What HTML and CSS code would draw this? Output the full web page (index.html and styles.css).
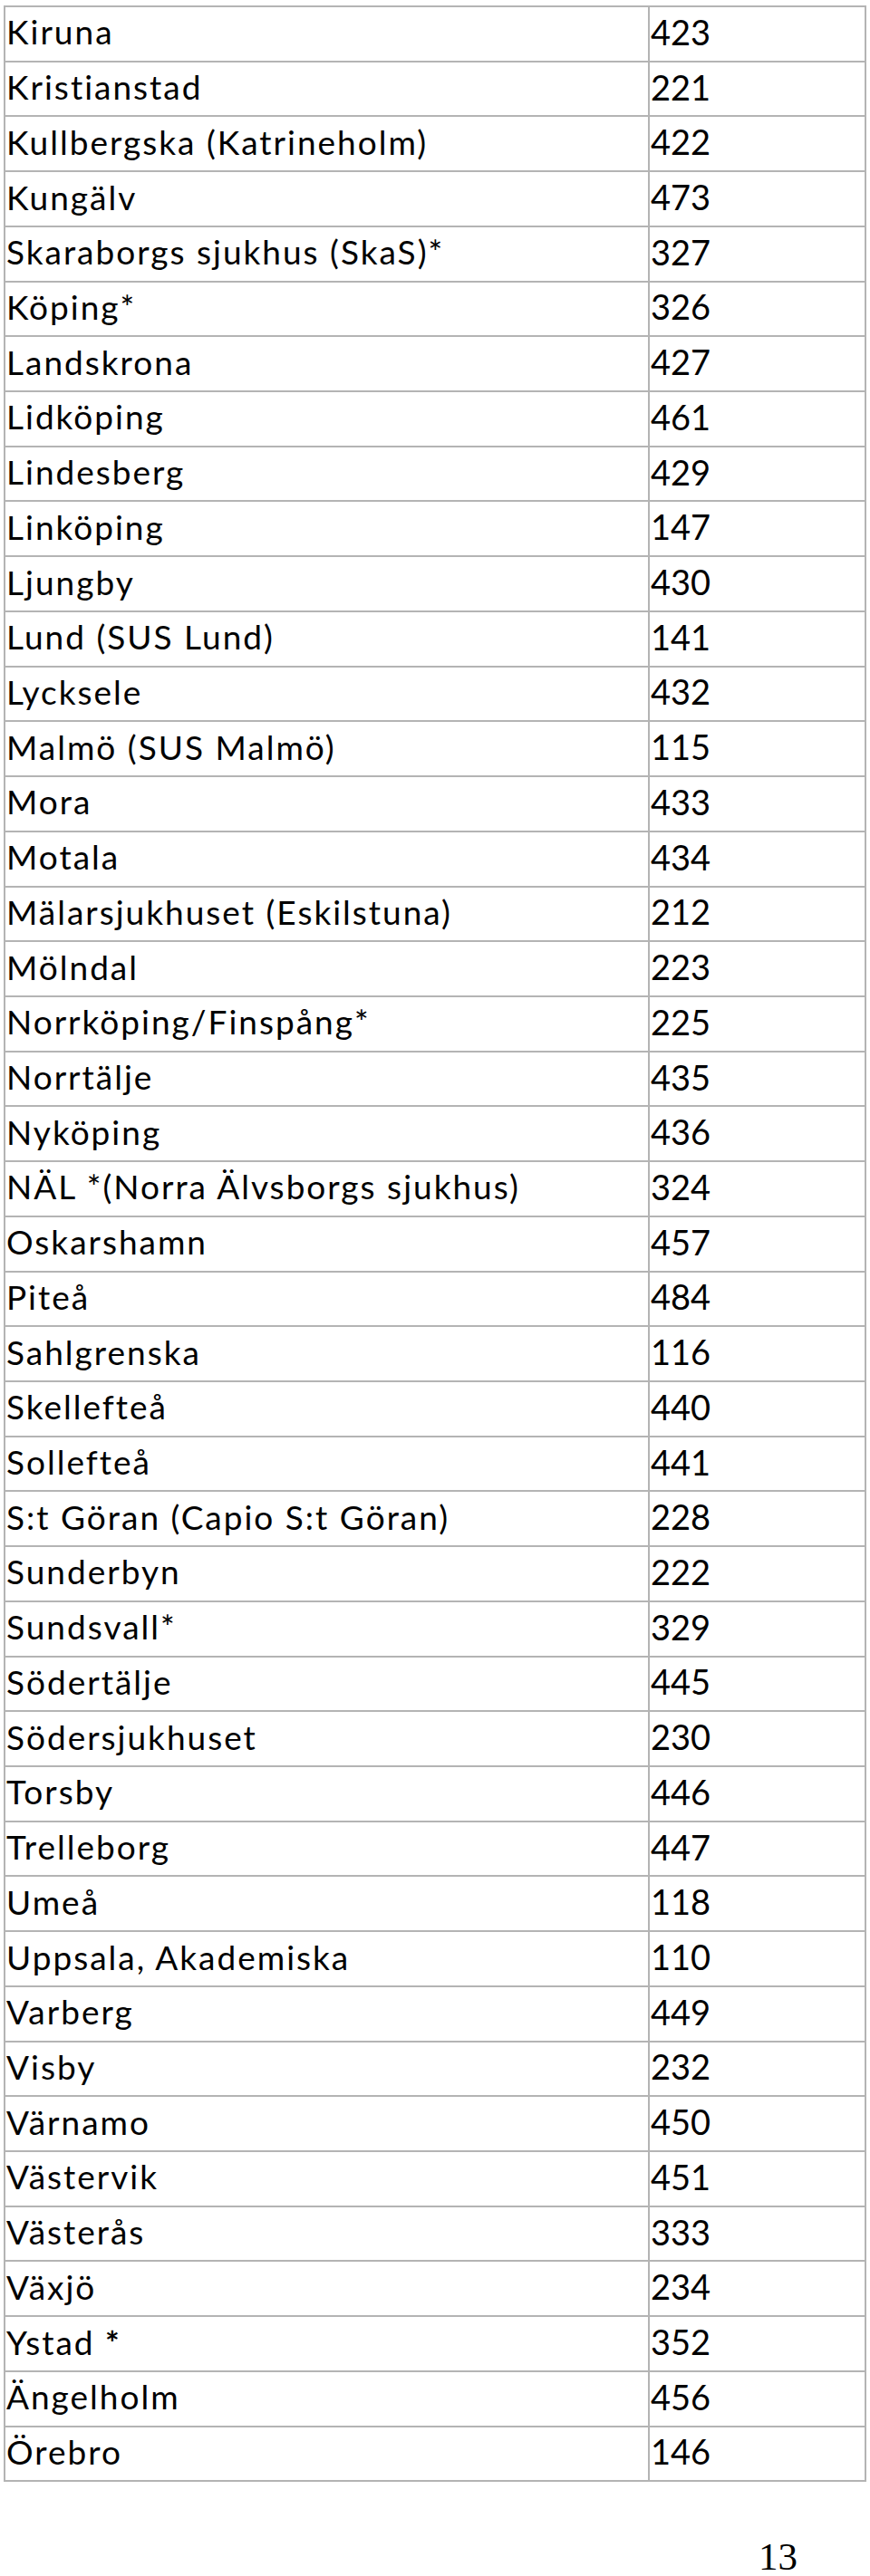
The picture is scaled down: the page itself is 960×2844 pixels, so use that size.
FILE: index.html
```html
<!DOCTYPE html>
<html lang="sv">
<head>
<meta charset="utf-8">
<title>Sjukhus</title>
<link rel="stylesheet" href="styles.css">
</head>
<body>
<table class="list">
<colgroup><col class="c-name"><col class="c-num"></colgroup>
<tr><td class="name">Kiruna</td><td class="num">423</td></tr>
<tr><td class="name">Kristianstad</td><td class="num">221</td></tr>
<tr><td class="name">Kullbergska (Katrineholm)</td><td class="num">422</td></tr>
<tr><td class="name">Kungälv</td><td class="num">473</td></tr>
<tr><td class="name">Skaraborgs sjukhus (SkaS)*</td><td class="num">327</td></tr>
<tr><td class="name">Köping*</td><td class="num">326</td></tr>
<tr><td class="name">Landskrona</td><td class="num">427</td></tr>
<tr><td class="name">Lidköping</td><td class="num">461</td></tr>
<tr><td class="name">Lindesberg</td><td class="num">429</td></tr>
<tr><td class="name">Linköping</td><td class="num">147</td></tr>
<tr><td class="name">Ljungby</td><td class="num">430</td></tr>
<tr><td class="name">Lund (SUS Lund)</td><td class="num">141</td></tr>
<tr><td class="name">Lycksele</td><td class="num">432</td></tr>
<tr><td class="name">Malmö (SUS Malmö)</td><td class="num">115</td></tr>
<tr><td class="name">Mora</td><td class="num">433</td></tr>
<tr><td class="name">Motala</td><td class="num">434</td></tr>
<tr><td class="name">Mälarsjukhuset (Eskilstuna)</td><td class="num">212</td></tr>
<tr><td class="name">Mölndal</td><td class="num">223</td></tr>
<tr><td class="name">Norrköping/Finspång*</td><td class="num">225</td></tr>
<tr><td class="name">Norrtälje</td><td class="num">435</td></tr>
<tr><td class="name">Nyköping</td><td class="num">436</td></tr>
<tr><td class="name">NÄL *(Norra Älvsborgs sjukhus)</td><td class="num">324</td></tr>
<tr><td class="name">Oskarshamn</td><td class="num">457</td></tr>
<tr><td class="name">Piteå</td><td class="num">484</td></tr>
<tr><td class="name">Sahlgrenska</td><td class="num">116</td></tr>
<tr><td class="name">Skellefteå</td><td class="num">440</td></tr>
<tr><td class="name">Sollefteå</td><td class="num">441</td></tr>
<tr><td class="name">S:t Göran (Capio S:t Göran)</td><td class="num">228</td></tr>
<tr><td class="name">Sunderbyn</td><td class="num">222</td></tr>
<tr><td class="name">Sundsvall*</td><td class="num">329</td></tr>
<tr><td class="name">Södertälje</td><td class="num">445</td></tr>
<tr><td class="name">Södersjukhuset</td><td class="num">230</td></tr>
<tr><td class="name">Torsby</td><td class="num">446</td></tr>
<tr><td class="name">Trelleborg</td><td class="num">447</td></tr>
<tr><td class="name">Umeå</td><td class="num">118</td></tr>
<tr><td class="name">Uppsala, Akademiska</td><td class="num">110</td></tr>
<tr><td class="name">Varberg</td><td class="num">449</td></tr>
<tr><td class="name">Visby</td><td class="num">232</td></tr>
<tr><td class="name">Värnamo</td><td class="num">450</td></tr>
<tr><td class="name">Västervik</td><td class="num">451</td></tr>
<tr><td class="name">Västerås</td><td class="num">333</td></tr>
<tr><td class="name">Växjö</td><td class="num">234</td></tr>
<tr><td class="name">Ystad <b>*</b></td><td class="num">352</td></tr>
<tr><td class="name">Ängelholm</td><td class="num">456</td></tr>
<tr><td class="name">Örebro</td><td class="num">146</td></tr>
</table>
<div class="pageno">13</div>
</body>
</html>
```
FILE: styles.css
```css
html, body {
  margin: 0;
  padding: 0;
  background: #ffffff;
}
body {
  padding: 6px 0 0 4px;
  font-family: Lato, "Liberation Sans", sans-serif;
  color: #000000;
}
.list {
  border-collapse: collapse;
  width: 950px;
  table-layout: fixed;
}
.c-name {
  width: 711px;
}
.c-num {
  width: 239px;
}
.list tr {
  height: 60.73px;
}
.list td {
  border: 2px solid #b4b4b4;
  padding: 0 0 5px 1px;
  line-height: 1;
  vertical-align: middle;
  white-space: nowrap;
  font-variant-ligatures: none;
}
.list td.name {
  font-size: 37px;
  letter-spacing: 2px;
}
.list td.num {
  font-size: 38px;
  letter-spacing: 0;
}
.pageno {
  font-family: "Liberation Serif", serif;
  font-size: 43px;
  line-height: 43px;
  width: 876px;
  text-align: right;
  margin-top: 61px;
}
```
